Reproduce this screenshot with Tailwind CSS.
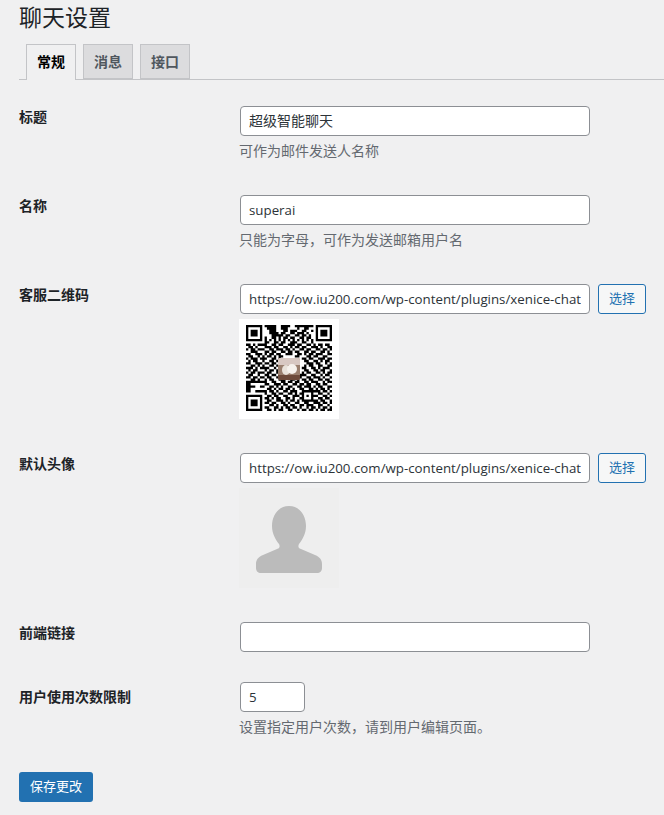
<!DOCTYPE html>
<html>
<head>
<meta charset="utf-8" />
<title>聊天设置</title>
<script src="https://cdn.jsdelivr.net/npm/@tailwindcss/browser@4"></script>
</head>
<body class="bg-[#f0f0f1] text-[#3c434a] text-[14px] font-['Open_Sans','Noto_Sans_CJK_SC',sans-serif] overflow-hidden">
<div class="w-[664px] h-[815px] pl-[19px] overflow-hidden">
  <h1 class="text-[23px] leading-[29px] text-[#1d2327] pt-[3px] h-[44px]">聊天设置</h1>
  <div class="flex h-[36px] border-b border-[#c3c4c7] pl-[7px] gap-[7px]">
    <span class="w-[50px] h-[36px] pb-[2px] border border-[#c3c4c7] border-b-0 bg-[#f0f0f1] text-black font-semibold flex items-center justify-center">常规</span>
    <span class="w-[50px] h-[35px] pb-[1px] border border-[#c3c4c7] bg-[#dcdcde] text-[#50575e] font-semibold flex items-center justify-center">消息</span>
    <span class="w-[50px] h-[35px] pb-[1px] border border-[#c3c4c7] bg-[#dcdcde] text-[#50575e] font-semibold flex items-center justify-center">接口</span>
  </div>

  <div class="flex mt-[26px] h-[89px]">
    <label class="w-[221px] font-semibold text-[#1d2327] leading-[21px]">标题</label>
    <div>
      <input class="block w-[350px] h-[30px] px-[8px] pb-[2px] bg-white border border-[#8c8f94] rounded-[4px] text-[14px] text-[#2c3338]" value="超级智能聊天" />
      <p class="text-[#646970] mt-[5px] -ml-[1px] leading-[20px]">可作为邮件发送人名称</p>
    </div>
  </div>

  <div class="flex h-[89px]">
    <label class="w-[221px] font-semibold text-[#1d2327] leading-[21px]">名称</label>
    <div>
      <input class="block w-[350px] h-[30px] px-[8px] pb-[1px] bg-white border border-[#8c8f94] rounded-[4px] text-[13.3px] text-[#2c3338]" value="superai" />
      <p class="text-[#646970] mt-[5px] -ml-[1px] leading-[20px]">只能为字母，可作为发送邮箱用户名</p>
    </div>
  </div>

  <div class="flex h-[169px]">
    <label class="w-[221px] font-semibold text-[#1d2327] leading-[21px]">客服二维码</label>
    <div>
      <div class="flex gap-[8px]">
        <input class="block w-[350px] h-[30px] px-[8px] pb-[1px] bg-white border border-[#8c8f94] rounded-[4px] text-[13.3px] text-[#2c3338]" value="https://ow.iu200.com/wp-content/plugins/xenice-chat/assets/images/qrcode.png" />
        <button class="w-[48px] h-[30px] bg-[#f6f7f7] border border-[#2271b1] rounded-[3px] text-[13px] text-[#2271b1]">选择</button>
      </div>
      <div class="relative w-[100px] h-[100px] mt-[5px] -ml-[1px] bg-white">
        <svg class="absolute left-[7px] top-[6px] w-[86px] h-[86px] blur-[0.3px]" viewBox="0 0 37 37"><path id="qr-path" fill="#000" d=""></path></svg>
        <svg class="absolute left-[39px] top-[39px] w-[22px] h-[22px] rounded-[2px]" viewBox="0 0 22 22">
          <rect width="22" height="22" fill="#9a7f6e"></rect>
          <rect width="22" height="7" fill="#d8c8c2"></rect>
          <rect y="17" width="22" height="5" fill="#6d4a3a"></rect>
          <ellipse cx="8" cy="12" rx="4" ry="5" fill="#e9e2da"></ellipse>
          <ellipse cx="14" cy="11" rx="5" ry="5" fill="#f6f2ed"></ellipse>
        </svg>
      </div>
    </div>
  </div>

  <div class="flex h-[169px]">
    <label class="w-[221px] font-semibold text-[#1d2327] leading-[21px]">默认头像</label>
    <div>
      <div class="flex gap-[8px]">
        <input class="block w-[350px] h-[30px] px-[8px] pb-[1px] bg-white border border-[#8c8f94] rounded-[4px] text-[13.3px] text-[#2c3338]" value="https://ow.iu200.com/wp-content/plugins/xenice-chat/assets/images/avatar.png" />
        <button class="w-[48px] h-[30px] bg-[#f6f7f7] border border-[#2271b1] rounded-[3px] text-[13px] text-[#2271b1]">选择</button>
      </div>
      <div class="w-[100px] h-[100px] mt-[5px] -ml-[1px] bg-[#eeeeee]">
        <svg class="w-[100px] h-[100px]" viewBox="0 0 100 100"><path fill="#bbbbbb" d="M50 18C39 18 33 28 33 38C33 46 37 52 40 56C41 58 41 60 38 61L24 67C19 69 17 72 17 76V80C17 83 19 85 22 85H78C81 85 83 83 83 80V76C83 72 81 69 76 67L62 61C59 60 59 58 60 56C63 52 67 46 67 38C67 28 61 18 50 18Z"></path></svg>
      </div>
    </div>
  </div>

  <div class="flex h-[60px]">
    <label class="w-[221px] font-semibold text-[#1d2327] leading-[21px]">前端链接</label>
    <input class="block w-[350px] h-[30px] px-[8px] bg-white border border-[#8c8f94] rounded-[4px] text-[13.3px] text-[#2c3338]" value="" />
  </div>

  <div class="flex h-[90px]">
    <label class="w-[221px] font-semibold text-[#1d2327] leading-[30px]">用户使用次数限制</label>
    <div>
      <input class="block w-[65px] h-[30px] px-[8px] pb-[1px] bg-white border border-[#8c8f94] rounded-[4px] text-[13.3px] text-[#2c3338]" value="5" />
      <p class="text-[#646970] mt-[5px] -ml-[1px] leading-[20px]">设置指定用户次数，请到用户编辑页面。</p>
    </div>
  </div>

  <button class="w-[74px] h-[30px] bg-[#2271b1] rounded-[3px] text-[13px] text-white">保存更改</button>
</div>
<script>
// qr modules, one string per row
let rows = [
  '1111111011111001111001111111101111111',
  '1000001001111001110000100110001000001',
  '1011101000111000110111001100101011101',
  '1011101000111101100110111010001011101',
  '1011101000011111011001101101001011101',
  '1000001010011010110110011011001000001',
  '1111111010101010101010101010101111111',
  '0000000011001101100111001100100000000',
  '1101011110011011001110110011010110110',
  '0110100011101100110101101100111010011',
  '1011011100110111011010011011001101101',
  '0011100011011001101101100110110011010',
  '1100111010110110011100110101101110011',
  '0110010101101011000001100011011001100',
  '1011101110011010000000001101100111011',
  '0101100100110100000000000110011010110',
  '1100111011011000000000000011101100101',
  '0011010100110100000000000101100110011',
  '1110101111001010000000001100110101110',
  '0101100010110100000000000110011011001',
  '1011011101100110000000001011001101011',
  '0110010011011010000000011100110010110',
  '1101101101100111011000110011011101001',
  '0011010010110011100110101101100110110',
  '1111111110011001101101100110111001011',
  '1100000011001110110011011011001101100',
  '1111001100110101001100110111010110011',
  '1100000001101011011010011001101011010',
  '1100111110110100110111001111111101101',
  '0000000010011011001101011000100110010',
  '1111111001101100110011101010111001101',
  '1000001011010110011010011000100110110',
  '1011101001100111010110101111111011001',
  '1011101011011001101001100110011101101',
  '1011101000110100110110011011100110010',
  '1000001011001101011011010010110101101',
  '1111111001101011001100101101101011011'
];
let d = '';
rows.forEach(function(row, y) {
  for (let x = 0; x < row.length; x++) {
    if (row[x] === '1') d += 'M' + x + ' ' + y + 'h1v1h-1z';
  }
});
document.querySelector('#qr-path').setAttribute('d', d);
</script>
</body>
</html>
